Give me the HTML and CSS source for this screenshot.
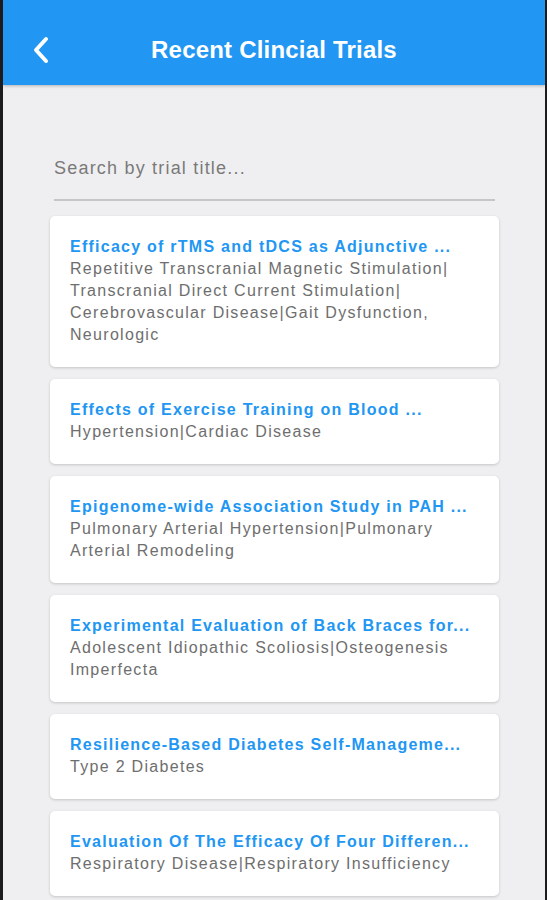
FILE: index.html
```html
<!DOCTYPE html>
<html lang="en">
<head>
    <meta charset="UTF-8">
    <meta name="viewport" content="width=device-width, initial-scale=1.0">
    <title>Recent Clincial Trials</title>
    <link rel="stylesheet" href="styles.css">
</head>
<body>

    <div class="screen">
        <div class="app-bar">
            <a href="#" class="back-btn" aria-label="Back">
                <svg width="18" height="28" viewBox="0 0 18 28">
                    <path d="M14 3 L4 14 L14 25" fill="none" stroke="#fff" stroke-width="4" stroke-linecap="round" stroke-linejoin="round"/>
                </svg>
            </a>
            <h1>Recent Clincial Trials</h1>
        </div>

        <div class="content">
            <div class="search">
                <input type="text" placeholder="Search by trial title...">
            </div>

            <div class="trial-list">
                <div class="trial-card">
                    <div class="trial-title">Efficacy of rTMS and tDCS as Adjunctive ...</div>
                    <div class="trial-conditions">Repetitive Transcranial Magnetic Stimulation|<br>Transcranial Direct Current Stimulation|<br>Cerebrovascular Disease|Gait Dysfunction,<br>Neurologic</div>
                </div>
                <div class="trial-card">
                    <div class="trial-title">Effects of Exercise Training on Blood ...</div>
                    <div class="trial-conditions">Hypertension|Cardiac Disease</div>
                </div>
                <div class="trial-card">
                    <div class="trial-title">Epigenome-wide Association Study in PAH ...</div>
                    <div class="trial-conditions">Pulmonary Arterial Hypertension|Pulmonary<br>Arterial Remodeling</div>
                </div>
                <div class="trial-card">
                    <div class="trial-title">Experimental Evaluation of Back Braces for...</div>
                    <div class="trial-conditions">Adolescent Idiopathic Scoliosis|Osteogenesis<br>Imperfecta</div>
                </div>
                <div class="trial-card">
                    <div class="trial-title">Resilience-Based Diabetes Self-Manageme...</div>
                    <div class="trial-conditions">Type 2 Diabetes</div>
                </div>
                <div class="trial-card">
                    <div class="trial-title">Evaluation Of The Efficacy Of Four Differen...</div>
                    <div class="trial-conditions">Respiratory Disease|Respiratory Insufficiency</div>
                </div>
            </div>
        </div>
    </div>

</body>
</html>
```

FILE: styles.css
```css
body {
    margin: 0;
    background-color: #1c1c1e;
    font-family: "Liberation Sans", Arial, sans-serif;
}

.screen {
    margin: 0 2px 0 3px;
    height: 900px;
    overflow: hidden;
    background-color: #efeff1;
}

.app-bar {
    height: 85px;
    background-color: #2196f3;
    display: grid;
    grid-template-columns: 1fr auto 1fr;
    align-items: center;
    box-shadow: 0 1px 3px rgba(0, 0, 0, 0.25);
}

.back-btn {
    display: flex;
    margin-left: 29px;
    margin-top: 14px;
    justify-self: start;
}

.app-bar h1 {
    margin: 14px 0 0 0;
    color: white;
    font-size: 24px;
    font-weight: bold;
    letter-spacing: 0.2px;
}

.content {
    padding: 0 46px 0 47px;
}

.search {
    padding: 69px 4px 0 4px;
}

.search input {
    width: 100%;
    box-sizing: border-box;
    border: none;
    border-bottom: 2px solid #c6c6c8;
    background: transparent;
    font-family: inherit;
    font-size: 18px;
    letter-spacing: 1.2px;
    padding: 4px 0 20px 0;
    outline: none;
}

.search input::placeholder {
    color: #7a7a7a;
}

.trial-list {
    display: flex;
    flex-direction: column;
    gap: 12px;
    margin-top: 15px;
}

.trial-card {
    background-color: white;
    border-radius: 5px;
    box-shadow: 0 1px 3px rgba(0, 0, 0, 0.18);
    padding: 20px 20px 21px 20px;
}

.trial-title {
    color: #2196f3;
    font-size: 16px;
    font-weight: bold;
    letter-spacing: 1.25px;
    line-height: 22px;
    white-space: nowrap;
}

.trial-conditions {
    color: #6e6e6e;
    font-size: 16px;
    letter-spacing: 1.3px;
    line-height: 22px;
}
```
